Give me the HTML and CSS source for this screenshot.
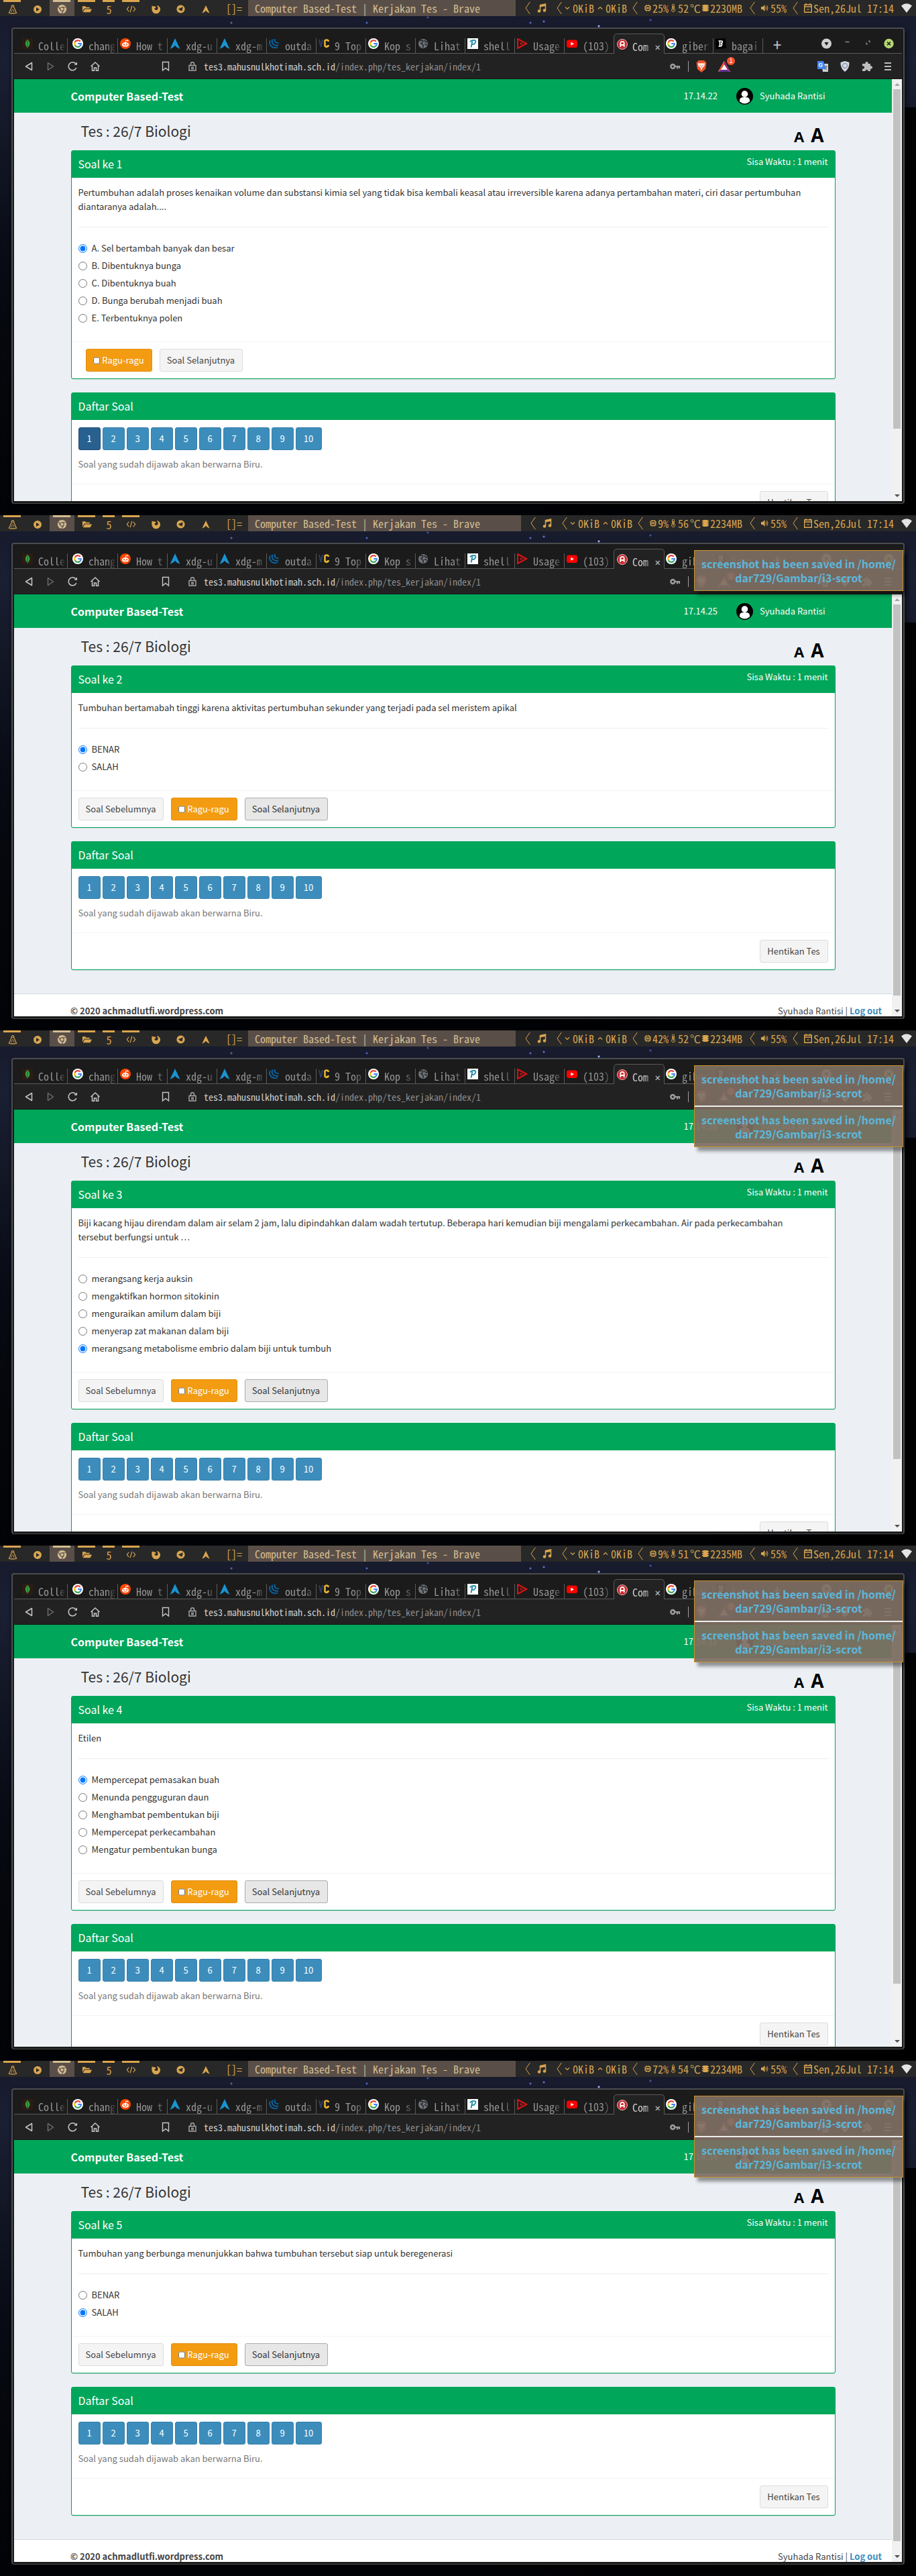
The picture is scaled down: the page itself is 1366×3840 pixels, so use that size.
FILE: index.html
```
<!DOCTYPE html>
<html lang="id">
<head>
<meta charset="utf-8">
<title>Computer Based-Test | Kerjakan Tes</title>
<link rel="stylesheet" href="styles.css">
</head>
<body>
<svg class="sprite" aria-hidden="true">
  <symbol id="i-linux" viewBox="0 0 16 16"><path d="M8 1C6.300 1 5.800 2.200 6 4c.1 1.600-2.500 4-2.800 7.200L1.500 14l4.200 1q2.300-1.200 4.600 0l4.200-1-1.700-2.800C12.500 8 9.900 5.600 10 4c.2-1.800-.3-3-2-3z" fill="none" stroke="currentColor" stroke-width="1.300"/><path d="M5.700 12.500q.3-4 2.300-5 2 1 2.300 5M7 4h2" stroke="currentColor" fill="none"/></symbol>
  <symbol id="i-play" viewBox="0 0 16 16"><path fill-rule="evenodd" d="M8 2a6 6 0 1 0 0 12A6 6 0 0 0 8 2zM6 5l5 3-5 3z" fill="currentColor"/></symbol>
  <symbol id="i-chrome" viewBox="0 0 16 16"><circle cx="8" cy="8" r="7" fill="currentColor"/><circle cx="8" cy="8" r="3" fill="currentColor" stroke="#5a4f48" stroke-width="1.200"/><path d="M8 5h6M5.300 9.400l-3-5.200M10.600 9.500l-3 5.300" stroke="#5a4f48" stroke-width="1.200"/></symbol>
  <symbol id="i-folder" viewBox="0 0 16 16"><path d="M1 12V3.500h4.500L7 5h5.500v2H4z" fill="currentColor"/><path d="M4.600 8H16l-2.600 5H1.800z" fill="currentColor"/></symbol>
  <symbol id="i-code" viewBox="0 0 16 16"><path d="M4.500 4L1.500 8l3 4M11.500 4l3 4-3 4M9.300 3L6.700 13" fill="none" stroke="currentColor" stroke-width="1.300"/></symbol>
  <symbol id="i-firefox" viewBox="0 0 16 16"><path d="M2 2.500Q3 4 5 3.600 8 3.500 8 6L5.500 7Q6 10 9 9.500c3-.5 3-4 .5-7.500C13 2.500 15 5.500 15 8.500A6.700 6.700 0 0 1 1.500 8.500C1.300 6 1.500 4 2 2.500z" fill="currentColor"/></symbol>
  <symbol id="i-telegram" viewBox="0 0 16 16"><path fill-rule="evenodd" d="M8 1.500a6.500 6.500 0 1 0 0 13 6.500 6.500 0 0 0 0-13zM11.500 4.500l-1.200 7-2.300-1.600-1.200 1.300-.3-2.200L3.800 8z" fill="currentColor"/></symbol>
  <symbol id="i-arch" viewBox="0 0 16 16"><path d="M8 1l6.500 13.500L9.600 12Q8 8 6.400 12L1.500 14.500z" fill="currentColor"/></symbol>
  <symbol id="i-sep" viewBox="0 0 8 20"><path d="M7.300 1L1 10l6.300 9" fill="none" stroke="currentColor"/></symbol>
  <symbol id="i-music" viewBox="0 0 14 16"><path d="M4.500 12.500V3.500L12.500 2v9" fill="none" stroke="currentColor" stroke-width="1.500"/><path d="M4.500 3.500L12.500 2v3l-8 1.500z" fill="currentColor"/><circle cx="3" cy="12.500" r="2.300" fill="currentColor"/><circle cx="11" cy="11.500" r="2.300" fill="currentColor"/></symbol>
  <symbol id="i-down" viewBox="0 0 8 8"><path d="M1 2.500l3 3 3-3" fill="none" stroke="currentColor" stroke-width="1.200"/></symbol>
  <symbol id="i-up" viewBox="0 0 8 8"><path d="M1 5.500l3-3 3 3" fill="none" stroke="currentColor" stroke-width="1.200"/></symbol>
  <symbol id="i-cpu" viewBox="0 0 10 12"><path d="M2 2.500h6v7H2zM4 5h2v2H4zM0 4h2M0 6h2M0 8h2M8 4h2M8 6h2M8 8h2M3.500 1v1.500M6.500 1v1.500M3.500 9.500V11M6.500 9.500V11" fill="none" stroke="currentColor" stroke-width="1.200"/></symbol>
  <symbol id="i-temp" viewBox="0 0 8 16"><path d="M2.300 9V3a1.700 1.700 0 0 1 3.400 0v6a3 3 0 1 1-3.400 0z" fill="none" stroke="currentColor"/><path d="M4 4v8" stroke="currentColor" stroke-width="1.600"/></symbol>
  <symbol id="i-mem" viewBox="0 0 10 12"><path d="M1.500 1h7v10h-7zM0 2h10v1.500H0zM0 5h10v1.500H0zM0 8h10v1.500H0z" fill="currentColor"/></symbol>
  <symbol id="i-vol" viewBox="0 0 11 12"><path d="M0 4h2.500L5.500 1v10l-3-3H0z" fill="currentColor"/><path d="M7 4q1.500 2 0 4M8.500 2q3 4 0 8" fill="none" stroke="currentColor"/></symbol>
  <symbol id="i-cal" viewBox="0 0 12 14"><path d="M.7 2h10.600v11.300H.7zM.7 5h10.600M3 0v3M9 0v3" fill="none" stroke="currentColor" stroke-width="1.400"/><path d="M4 9h4" stroke="currentColor"/></symbol>
  <symbol id="i-wifi" viewBox="0 0 16 14"><path d="M0 3.500Q8-3 16 3.500L8 14z" fill="#e4e4e4"/></symbol>

  <symbol id="f-mongo" viewBox="0 0 16 16"><path d="M0 0h16v16H0z" fill="#2c1c13"/><path d="M8 1.500Q15 8 8 14.500 1.500 8 8 1.500z" fill="#3aa043"/><path d="M8 3v12" stroke="#1d5c2a"/></symbol>
  <symbol id="f-google" viewBox="0 0 16 16"><circle cx="8" cy="8" r="8" fill="#fff"/><g fill="none" stroke-width="2.200"><path d="M11.800 4.800A4.800 4.800 0 0 0 3.700 6" stroke="#ea4335"/><path d="M3.700 6a4.800 4.800 0 0 0 0 4.200" stroke="#fbbc05"/><path d="M3.700 10.200a4.800 4.800 0 0 0 7.800 1.200" stroke="#34a853"/><path d="M11.500 11.400A4.800 4.800 0 0 0 12.800 8H8.200" stroke="#4285f4"/></g></symbol>
  <symbol id="f-reddit" viewBox="0 0 16 16"><circle cx="8" cy="8" r="8" fill="#ff4500"/><ellipse cx="8" cy="9.500" rx="5" ry="3.500" fill="#fff"/><circle cx="6" cy="9" r="1" fill="#ff4500"/><circle cx="10" cy="9" r="1" fill="#ff4500"/><path d="M8 6l1-3 2 .5" stroke="#fff" fill="none"/><circle cx="11.500" cy="3.500" r="1" fill="#fff"/><path d="M6 11q2 1.300 4 0" stroke="#ff4500" fill="none" stroke-width=".8"/></symbol>
  <symbol id="f-arch" viewBox="0 0 16 16"><path d="M8 0l7.500 16L9.800 13Q8 9 6.200 13L.5 16z" fill="#1a93d1"/></symbol>
  <symbol id="f-jquery" viewBox="0 0 16 16"><g fill="none" stroke="#0868ac" stroke-width="1.800"><path d="M2 3C-1 10 5 16 13 13.500"/><path d="M5.500 1.500C3 7 7 12 14 10.500"/><path d="M9 1C7.500 4.500 10 7.500 14.500 7"/></g></symbol>
  <symbol id="f-vc" viewBox="0 0 16 16"><path d="M1 2l2.500 11L6 2" fill="none" stroke="#2c3a63" stroke-width="2.200"/><path d="M14.500 5V3.500Q12 1.500 9.500 3.500v8q2.500 2.500 5 0V10" fill="none" stroke="#e8b32a" stroke-width="2.600"/></symbol>
  <symbol id="f-globe" viewBox="0 0 16 16"><circle cx="8" cy="8" r="7" fill="#6f747a"/><path d="M3 4q3-2 5 0-1 3-3 3.500L8 10v4M10 3q1 3 4 3M10 9q3-1 3 2" fill="none" stroke="#222" stroke-width="1.500"/></symbol>
  <symbol id="f-p" viewBox="0 0 16 16"><path d="M0 0h16v16H0z" fill="#fff"/><path d="M5.500 13.500L7.500 4M4 5.500Q6 2.500 10 3t1.500 4Q10 9.500 7 9" fill="none" stroke="#1f8aa5" stroke-width="1.800"/></symbol>
  <symbol id="f-red" viewBox="0 0 16 16"><path d="M1 1l13 7L1 15z" fill="none" stroke="#d31313" stroke-width="2.200"/><path d="M5 6l4 2-4 2z" fill="#d31313"/></symbol>
  <symbol id="f-yt" viewBox="0 0 16 16"><rect y="2.500" width="16" height="11.500" rx="3" fill="#f00"/><path d="M6.300 5.800L11 8.200l-4.700 2.500z" fill="#fff"/></symbol>
  <symbol id="f-cbt" viewBox="0 0 16 16"><circle cx="8" cy="8" r="7.500" fill="#c9282d" stroke="#e3b7b7"/><path d="M5.300 12V6.500a2.700 2.700 0 0 1 5.400 0V12M5.300 9h5.400" fill="none" stroke="#fff" stroke-width="1.800"/></symbol>
  <symbol id="f-b" viewBox="0 0 16 16"><path d="M0 1l15-1 1 15-16 1z" fill="#000"/><path d="M4.500 4h4.500q2 .5 1 2.500-.5 1-2 1.200 2 .3 1.500 2.300Q9 12 7 12H4.500M6.500 4v8" fill="none" stroke="#fff" stroke-width="1.700"/></symbol>

  <symbol id="t-back" viewBox="0 0 12 14"><path d="M10.500 1.500v11L1.500 7z" fill="none" stroke="#c6c6c6" stroke-width="1.500" stroke-linejoin="round"/></symbol>
  <symbol id="t-fwd" viewBox="0 0 12 14"><path d="M1.500 1.500v11L9.500 7z" fill="none" stroke="#6d6d6d" stroke-width="1.500" stroke-linejoin="round"/></symbol>
  <symbol id="t-reload" viewBox="0 0 16 16"><path d="M12.700 3.800A6 6 0 1 0 13.800 10" fill="none" stroke="#c6c6c6" stroke-width="1.600"/><path d="M10.500 5.800h4.500V1.300z" fill="#c6c6c6"/></symbol>
  <symbol id="t-home" viewBox="0 0 16 16"><path d="M1.500 8L8 2l6.500 6M3.500 7v7.300h3V10h3v4.300h3V7" fill="none" stroke="#c6c6c6" stroke-width="1.500"/></symbol>
  <symbol id="t-mark" viewBox="0 0 12 16"><path d="M1.500 1.500h9v12.500L6 10.500 1.500 14z" fill="none" stroke="#c6c6c6" stroke-width="1.400"/></symbol>
  <symbol id="t-lock" viewBox="0 0 12 14"><path d="M1 5.500h10V13H1zM3.500 5.500V3.300a2.500 2.500 0 0 1 5 0v2.200M4 8.500h4M4 10.500h4" fill="none" stroke="#a8a8a8" stroke-width="1.400"/></symbol>
  <symbol id="t-key" viewBox="0 0 16 10"><path d="M7.500 5H15M11 5v3.500M14 5v3" stroke="#9a9a9a" stroke-width="2.200"/><circle cx="4.300" cy="5" r="2.900" fill="none" stroke="#9a9a9a" stroke-width="2.600"/></symbol>
  <symbol id="t-brave" viewBox="0 0 16 18"><path d="M4 0h8l3.500 3.500L14 13l-6 5-6-5L.5 3.500z" fill="#f1562b"/><path d="M3 4l3 .8L8 4l2 .8 3-.8-.5 4L9.500 11 8 15 6.500 11 3.500 8z" fill="#fff"/><path d="M5 7l2 .8M11 7l-2 .8M8 8v3" stroke="#f1562b"/></symbol>
  <symbol id="t-bat" viewBox="0 0 18 16"><path d="M9 0l9 16H0z" fill="#fff"/><path d="M9 0v5l-5 8-4 3z" fill="#ff4724"/><path d="M9 0l9 16-4-3L9 5z" fill="#9e1f63"/><path d="M0 16l4-3h10l4 3z" fill="#662d91"/></symbol>
  <symbol id="t-trans" viewBox="0 0 16 16"><path d="M6 4h10v12H8z" fill="#d0d4d8"/><path d="M0 0h9l3.500 12H0z" fill="#4285f4"/><path d="M7 4.500A2.500 2.500 0 1 0 7 7.500V6H5" fill="none" stroke="#fff" stroke-width="1.200"/><path d="M10 8h5M12.500 7v1M11 9q1 3 3.500 4M14 8q-.5 3-3 5" stroke="#5a6068" fill="none" stroke-width=".9"/></symbol>
  <symbol id="t-shield" viewBox="0 0 14 16"><path d="M7 0l6.500 2Q14 11 7 16 0 11 .5 2z" fill="#d5dae4"/><circle cx="7" cy="7" r="3.500" fill="none" stroke="#8d97ab" stroke-width="1.500"/></symbol>
  <symbol id="t-ext" viewBox="0 0 16 16"><path d="M1 4h4.500a2.200 2.200 0 1 1 4 0H13v3.500a2.200 2.200 0 1 1 0 4V15H9.500a2 2 0 1 0-4 0H1v-3.500a2.200 2.200 0 1 0 0-4z" fill="#bdbdbd"/></symbol>
  <symbol id="t-menu" viewBox="0 0 10 14"><path d="M0 2h10M0 7h10M0 12h10" stroke="#bdbdbd" stroke-width="2"/></symbol>
  <symbol id="w-drop" viewBox="0 0 16 16"><circle cx="8" cy="8" r="7.500" fill="#d0d0d0"/><path d="M4.800 6h6.400L8 11z" fill="#1b1b1b"/></symbol>
  <symbol id="w-min" viewBox="0 0 16 16"><path d="M5 5.500h6" stroke="#8a8a8a" stroke-width="1.500"/></symbol>
  <symbol id="w-max" viewBox="0 0 16 16"><path d="M8 3.500h3v4zM5 5.500v4h3z" fill="#8a8a8a"/></symbol>
  <symbol id="w-close" viewBox="0 0 16 16"><circle cx="8" cy="8" r="7.200" fill="#b5d873"/><path d="M5.500 5.500l5 5M10.500 5.500l-5 5" stroke="#222" stroke-width="1.700"/></symbol>
  <symbol id="avatar" viewBox="0 0 26 26"><circle cx="13" cy="13" r="13"/><circle cx="13" cy="9.500" r="5" fill="#fff"/><path d="M5 21q0-6.500 5-6.500h6q5 0 5 6.500-8 7-16 0z" fill="#fff"/></symbol>
</svg>
<main id="desktops" class="desktops"></main>
<script src="app.js"></script>
</body>
</html>
```
FILE: styles.css
```
* { box-sizing: border-box; }
:root {
  --mono: "Noto Sans Mono CJK SC", "DejaVu Sans Mono", monospace;
  --sans: "Noto Sans CJK SC", "Noto Sans", sans-serif;
  --green: #00a65a;
  --gold: #d9a550;
}
body { margin: 0; background: #000; font-family: var(--sans); color: #333; }
a { color: #3c8dbc; text-decoration: none; }
button, input { font: inherit; color: inherit; margin: 0; }
button { cursor: pointer; }
.sprite { position: absolute; width: 0; height: 0; }
.icon { display: block; flex: none; }

.desktops { display: grid; grid-template-rows: repeat(5, minmax(0, 1fr)); height: 100vh; }
.desktop {
  position: relative;
  display: flex;
  flex-direction: column;
  background:
    radial-gradient(circle at 345px 34px, #6a5f8a 1px, transparent 2px),
    radial-gradient(circle at 547px 34px, #4a62c0 1px, transparent 2px),
    radial-gradient(circle at 638px 26px, #3c50a0 1px, transparent 2px),
    radial-gradient(circle at 791px 34px, #5468b8 1px, transparent 2px),
    radial-gradient(circle at 811px 32px, #5a70d8 1px, transparent 2px),
    radial-gradient(circle at 893px 39px, #a8b8ff 1px, transparent 2px),
    radial-gradient(circle at 970px 30px, #4054a0 1px, transparent 2px),
    linear-gradient(90deg, transparent 50%, rgba(0, 0, 0, .9) 99%) 0 160px no-repeat,
    linear-gradient(#161a2a, #1a1f33 12%, #121624 30%, #080b14 50%, #05060a 75%, #020307);
}

/* Status bar */
.bar { display: flex; align-items: stretch; height: 24px; flex: none; background: #282828; color: var(--gold); font: 16px/24px var(--mono); }
.ws { display: flex; flex: none; width: 37px; border-top: 3px solid transparent; justify-content: center; align-items: center; line-height: 18px; position: relative; }
.ws--narrow { width: 29px; }
.ws--used::before { content: ""; position: absolute; top: -3px; left: 5px; right: 6px; height: 3px; background: var(--gold); }
.ws--active { background: #5a4f48; color: #d3bd92; border-top-color: #5a4f48; }
.ws--active::before { background: #d3bd92; }
.layout-mode { width: 45px; padding-left: 12px; }
.bar-title { flex: 1; min-width: 0; overflow: hidden; white-space: nowrap; padding-left: 10px; background: #5a4f48; color: #d3bd92; }
.stats { display: flex; align-items: center; white-space: nowrap; padding: 0 6px 0 14px; }
.stat { display: flex; align-items: center; gap: 3px; }
.stat--net { gap: 4px; padding: 0 8px 0 4px; }
.stat--net .icon + span + .icon { margin-left: 1px; }
.stat--music { padding: 0 15px 0 10px; }
.stat--hw { gap: 2px; padding: 0 11px 0 10px; }
.stat--vol { padding: 0 9px 0 9px; }
.stat--date { padding: 0 11px 0 9px; gap: 2px; }

/* Browser window */
.window {
  flex: 1;
  min-height: 0;
  display: flex;
  flex-direction: column;
  margin: 17px;
  border: 2px solid #4a4c4e;
  border-bottom-width: 1px;
  border-radius: 4px;
  background: #1b1b1b;
  padding: 0 2px 3px;
  box-shadow: 2px 4px 8px rgba(0, 0, 0, .6);
}
.tabs { display: flex; align-items: flex-end; height: 37px; flex: none; font: 16px/22px var(--mono); color: #949494; border-bottom: 1px solid #5a5a5a; }
.tab { display: flex; align-items: center; gap: 8px; width: 74px; height: 22px; padding-left: 3px; border-right: 1px solid #5a5a5a; }
.tab .icon { margin-top: -6px; }
.tab--first { width: 80px; padding-left: 12px; }
.tab--second { width: 75px; padding-left: 7px; }
.tab-name { flex: 1; overflow: hidden; white-space: nowrap; margin-right: 4px; -webkit-mask-image: linear-gradient(90deg, #000 70%, rgba(0, 0, 0, .2)); mask-image: linear-gradient(90deg, #000 70%, rgba(0, 0, 0, .2)); }
.tab--before { border-right-color: transparent; }
.tab--active { height: 30px; width: 76px; margin: 0 -1px -1px; padding: 6px 5px 0 4px; gap: 7px; border: 1px solid #5a5a5a; border-bottom: 0; border-radius: 5px 5px 0 0; background: #222; color: #c8c8c8; }
.tab--active .tab-name { margin-right: -1px; }
.tab-close, .tab-new { border: 0; padding: 0; background: none; color: #c4c4c4; line-height: 20px; }
.tab-close { font-size: 14px; }
.tab-new { font-size: 24px; width: 42px; height: 26px; }
.controls { display: flex; gap: 14px; margin-left: auto; padding: 0 11px 6px 0; }
.controls .icon { width: 17px; height: 16px; }
.toolbar { display: flex; align-items: center; height: 38px; flex: none; padding: 0 16px; background: #222; border-bottom: 1px solid #151515; font: 14px/20px var(--mono); }
.nav-icons { display: flex; align-items: center; gap: 18px; width: 204px; }
.nav-icons .icon:nth-child(2) { margin-left: 3px; }
.url { display: flex; align-items: center; flex: 1; min-width: 0; color: #8c8c8c; }
.url-lock { margin: 0 11px 0 28px; }
.url b { font-weight: 400; color: #d0d0d0; }
.url-key { margin-left: auto; margin-right: 11px; }
.exts { display: flex; align-items: center; width: 303px; }
.exts-line { width: 1px; height: 16px; background: #a0a0a0; margin-right: 11px; }
.bat { position: relative; margin-left: 17px; }
.badge { position: absolute; left: 13px; top: -6px; width: 12px; height: 12px; border-radius: 6px; background: #fb542b; color: #fff; font: 9px/12px var(--sans); text-align: center; }
.exts-right { display: flex; align-items: center; gap: 18px; margin-left: auto; }

/* Page inside the browser */
.view { flex: 1; min-height: 0; display: flex; }
.page { flex: 1; min-width: 0; overflow: hidden; background: #ecf0f5; font-size: 13px; line-height: 20px; }
.container { max-width: 1140px; margin: 0 auto; }
.site-head { background: var(--green); color: #fff; }
.site-head .container { display: flex; align-items: center; height: 50px; padding-right: 15px; }
.brand { color: #fff; font-size: 16px; font-weight: 700; margin-right: auto; }
.clock { margin-right: 28px; }
.user { display: flex; align-items: center; gap: 10px; color: #fff; }
.page-head { display: flex; justify-content: space-between; height: 56px; padding: 11px 15px 0; }
.page-head h1 { margin: 0; font-size: 21px; line-height: 32px; font-weight: 400; }
.sizes { display: flex; align-items: baseline; gap: 10px; color: #000; font-family: "Open Sans", sans-serif; font-weight: 700; padding-right: 2px; }
.size { border: 0; padding: 0; background: none; }
.size--small { font-size: 22px; line-height: 44px; }
.size--large { font-size: 28px; line-height: 44px; }
.box { background: #fff; border: 1px solid var(--green); border-radius: 3px; margin-bottom: 20px; box-shadow: 0 1px 1px rgba(0, 0, 0, .1); }
.box-head { display: flex; justify-content: space-between; height: 40px; padding: 0 10px; background: var(--green); color: #fff; }
.box-head h2 { margin: 0; font-size: 16px; line-height: 38px; font-weight: 400; }
.box-head span { line-height: 32px; }
.box-body { padding: 11px 10px 19px; }
.question { margin: 0; line-height: 21px; }
.box-body hr { margin: 20px 0 18px; border: 0; border-top: 1px solid #eee; }
.options { border: 0; margin: 0; padding: 0 0 3px; }
.option { display: flex; align-items: center; gap: 7px; height: 26px; }
.option input { width: 13px; height: 13px; }
.box-foot { display: flex; gap: 11px; padding: 10px; border-top: 1px solid #f4f4f4; }
.box-foot--first { padding-left: 21px; }
.box-foot--end { justify-content: flex-end; }
.btn { display: flex; align-items: center; justify-content: center; gap: 3px; height: 34px; padding: 0 12px; border: 1px solid #ddd; border-radius: 3px; background: #f4f4f4; color: #444; white-space: nowrap; }
.btn--warn { width: 99px; background: #f39c12; border-color: #e08e0b; color: #fff; }
.btn--warn input { width: 10px; height: 13px; }
.btn--prev { width: 127px; }
.btn--next { width: 124px; }
.btn--stop { width: 102px; }
.btn--focus { background: #e7e7e7; border-color: #adadad; color: #333; }
.numbers { display: flex; gap: 3px; }
.num { width: 33px; padding: 0; background: #3c8dbc; border-color: #367fa9; color: #fff; }
.num--wide { width: 39px; }
.num--current { background: #286090; border-color: #204d74; }
.hint { margin: 11px 0 0; color: #777; }
.site-foot { margin-top: 35px; padding: 15px 15px 15px 0; background: #fff; border-top: 1px solid #d2d6de; color: #444; }
.site-foot-in { display: flex; justify-content: space-between; margin-left: 84px; }

.scroll { flex: none; width: 15px; display: flex; flex-direction: column; background: #f1f1f1; padding: 6px 2px; }
.scroll-up, .scroll-down { align-self: center; border: 4px solid transparent; border-top: 0; border-bottom-color: #a3a3a3; }
.scroll-down { border: 4px solid transparent; border-bottom: 0; border-top-color: #505050; }
.scroll-track { flex: 1; min-height: 0; margin: 5px 0; align-self: stretch; }
.scroll-thumb { background: #c1c1c1; }

/* Desktop notifications, over the window */
.notices { position: absolute; top: 52px; right: 19px; width: 312px; border: 1px solid #c8922a; background: rgba(126, 110, 99, .93); box-shadow: 5px 6px 5px rgba(0, 0, 0, .4); color: #5cb8dc; font: 700 16px/21px var(--sans); text-align: center; }
.notice { margin: 0; padding: 9px 8px 8px; }
.notice + .notice { border-top: 2px solid #eee; }
```
FILE: app.js
```
const frames = [
  {
    clock: "17.14.22", cpu: "25%", temp: "52", mem: "2230MB", thumb: 84.5, notices: 0, checked: 0,
    question: "Pertumbuhan adalah proses kenaikan volume dan substansi kimia sel yang tidak bisa kembali keasal atau irreversible karena adanya pertambahan materi, ciri dasar pertumbuhan<br>diantaranya adalah....",
    options: ["A. Sel bertambah banyak dan besar", "B. Dibentuknya bunga", "C. Dibentuknya buah", "D. Bunga berubah menjadi buah", "E. Terbentuknya polen"]
  },
  {
    clock: "17.14.25", cpu: "9%", temp: "56", mem: "2234MB", thumb: 97.3, notices: 1, checked: 0,
    question: "Tumbuhan bertamabah tinggi karena aktivitas pertumbuhan sekunder yang terjadi pada sel meristem apikal",
    options: ["BENAR", "SALAH"]
  },
  {
    clock: "17.14.28", cpu: "42%", temp: "52", mem: "2234MB", thumb: 84.5, notices: 2, checked: 4,
    question: "Biji kacang hijau direndam dalam air selam 2 jam, lalu dipindahkan dalam wadah tertutup. Beberapa hari kemudian biji mengalami perkecambahan. Air pada perkecambahan<br>tersebut berfungsi untuk &hellip;",
    options: ["merangsang kerja auksin", "mengaktifkan hormon sitokinin", "menguraikan amilum dalam biji", "menyerap zat makanan dalam biji", "merangsang metabolisme embrio dalam biji untuk tumbuh"]
  },
  {
    clock: "17.14.31", cpu: "9%", temp: "51", mem: "2235MB", thumb: 86.8, notices: 2, checked: 0,
    question: "Etilen",
    options: ["Mempercepat pemasakan buah", "Menunda pengguguran daun", "Menghambat pembentukan biji", "Mempercepat perkecambahan", "Mengatur pembentukan bunga"]
  },
  {
    clock: "17.14.34", cpu: "72%", temp: "54", mem: "2234MB", thumb: 97.3, notices: 2, checked: 1,
    question: "Tumbuhan yang berbunga menunjukkan bahwa tumbuhan tersebut siap untuk beregenerasi",
    options: ["BENAR", "SALAH"]
  }
];

const tabs = [
  ["mongo", "Colle", "first"], ["google", "chang", "second"], ["reddit", "How t"], ["arch", "xdg-u"], ["arch", "xdg-m"],
  ["jquery", "outda"], ["vc", "9 Top"], ["google", "Kop s"], ["globe", "Lihat"], ["p", "shell"], ["red", "Usage"],
  ["yt", "(103)", "before"], ["cbt", "Com", "active"], ["google", "giber"], ["b", "bagai"]
];

const icon = (id, w, h = w, cls = "") =>
  `<svg class="icon ${cls}" width="${w}" height="${h}" aria-hidden="true"><use href="#${id}"/></svg>`;
const sep = icon("i-sep", 8, 20);

const bar = f => `
  <div class="bar">
    <div class="ws ws--used">${icon("i-linux", 14)}</div>
    <div class="ws">${icon("i-play", 16)}</div>
    <div class="ws ws--used ws--active">${icon("i-chrome", 15)}</div>
    <div class="ws ws--used">${icon("i-folder", 15)}</div>
    <div class="ws ws--used ws--narrow">5</div>
    <div class="ws ws--used">${icon("i-code", 15)}</div>
    <div class="ws">${icon("i-firefox", 15)}</div>
    <div class="ws">${icon("i-telegram", 15)}</div>
    <div class="ws">${icon("i-arch", 14)}</div>
    <div class="layout-mode">[]=</div>
    <div class="bar-title">Computer Based-Test | Kerjakan Tes - Brave</div>
    <div class="stats">
      ${sep}<div class="stat stat--music">${icon("i-music", 14, 16)}</div>
      ${sep}<div class="stat stat--net">${icon("i-down", 8)}<span>0KiB</span>${icon("i-up", 8)}<span>0KiB</span></div>
      ${sep}<div class="stat stat--hw">${icon("i-cpu", 10, 12)}<span>${f.cpu}</span>${icon("i-temp", 10, 14)}<span>${f.temp}</span><span>℃</span>${icon("i-mem", 10, 12)}<span>${f.mem}</span></div>
      ${sep}<div class="stat stat--vol">${icon("i-vol", 11, 12)}<span>55%</span></div>
      ${sep}<div class="stat stat--date">${icon("i-cal", 12, 14)}<span>Sen,26Jul 17:14</span></div>
      ${icon("i-wifi", 16, 14)}
    </div>
  </div>`;

const chrome = () => `
  <div class="tabs">
    ${tabs.map(([fav, name, mod]) => `<div class="tab ${mod ? "tab--" + mod : ""}">${icon("f-" + fav, 16)}<span class="tab-name">${name}</span>${mod === "active" ? '<button class="tab-close" type="button" aria-label="Tutup tab">✕</button>' : ""}</div>`).join("")}
    <button class="tab-new" type="button" aria-label="Tab baru">+</button>
    <div class="controls">${icon("w-drop", 16)}${icon("w-min", 16)}${icon("w-max", 16)}${icon("w-close", 16)}</div>
  </div>
  <div class="toolbar">
    <div class="nav-icons">${icon("t-back", 12, 14)}${icon("t-fwd", 12, 14)}${icon("t-reload", 16)}${icon("t-home", 16)}</div>
    <div class="url">${icon("t-mark", 12, 16)}${icon("t-lock", 12, 14, "url-lock")}<span><b>tes3.mahusnulkhotimah.sch.id</b>/index.php/tes_kerjakan/index/1</span>${icon("t-key", 16, 10, "url-key")}</div>
    <div class="exts">
      <span class="exts-line"></span>${icon("t-brave", 16, 18)}
      <div class="bat">${icon("t-bat", 18, 16)}<span class="badge">1</span></div>
      <div class="exts-right">${icon("t-trans", 16)}${icon("t-shield", 14, 16)}${icon("t-ext", 16)}${icon("t-menu", 10, 14)}</div>
    </div>
  </div>`;

const page = (f, i) => `
  <div class="page">
    <header class="site-head"><div class="container">
      <a class="brand" href="#">Computer Based-Test</a>
      <span class="clock">${f.clock}</span>
      <a class="user" href="#">${icon("avatar", 25)}<span>Syuhada Rantisi</span></a>
    </div></header>
    <div class="container">
      <div class="page-head">
        <h1>Tes : 26/7 Biologi</h1>
        <div class="sizes"><button class="size size--small" type="button">A</button><button class="size size--large" type="button">A</button></div>
      </div>
      <section class="box">
        <div class="box-head"><h2>Soal ke ${i + 1}</h2><span>Sisa Waktu : 1 menit</span></div>
        <div class="box-body">
          <p class="question">${f.question}</p>
          <hr>
          <fieldset class="options">
            ${f.options.map((o, n) => `<label class="option"><input type="radio" name="soal-${i}" ${n === f.checked ? "checked" : ""}>${o}</label>`).join("")}
          </fieldset>
        </div>
        <div class="box-foot ${i ? "" : "box-foot--first"}">
          ${i ? '<button class="btn btn--prev" type="button">Soal Sebelumnya</button>' : ""}
          <label class="btn btn--warn"><input type="checkbox">Ragu-ragu</label>
          <button class="btn btn--next ${i ? "btn--focus" : ""}" type="button">Soal Selanjutnya</button>
        </div>
      </section>
      <section class="box">
        <div class="box-head"><h2>Daftar Soal</h2></div>
        <div class="box-body">
          <div class="numbers">${Array.from({ length: 10 }, (_, n) => `<a class="btn num ${n === 9 ? "num--wide" : ""} ${!i && !n ? "num--current" : ""}" href="#">${n + 1}</a>`).join("")}</div>
          <p class="hint">Soal yang sudah dijawab akan berwarna Biru.</p>
        </div>
        <div class="box-foot box-foot--end"><button class="btn btn--stop" type="button">Hentikan Tes</button></div>
      </section>
    </div>
    <footer class="site-foot"><div class="site-foot-in">
      <strong>© 2020 achmadlutfi.wordpress.com</strong>
      <span>Syuhada Rantisi | <a href="#"><strong>Log out</strong></a></span>
    </div></footer>
  </div>
  <div class="scroll"><span class="scroll-up"></span><div class="scroll-track"><div class="scroll-thumb" style="height:${f.thumb}%"></div></div><span class="scroll-down"></span></div>`;

const notice = '<p class="notice">screenshot has been saved in /home/<br>dar729/Gambar/i3-scrot</p>';

document.getElementById("desktops").innerHTML = frames.map((f, i) => `
  <section class="desktop">
    ${bar(f)}
    <div class="window">${chrome()}<div class="view">${page(f, i)}</div></div>
    ${f.notices ? `<div class="notices">${notice.repeat(f.notices)}</div>` : ""}
  </section>`).join("");
```
